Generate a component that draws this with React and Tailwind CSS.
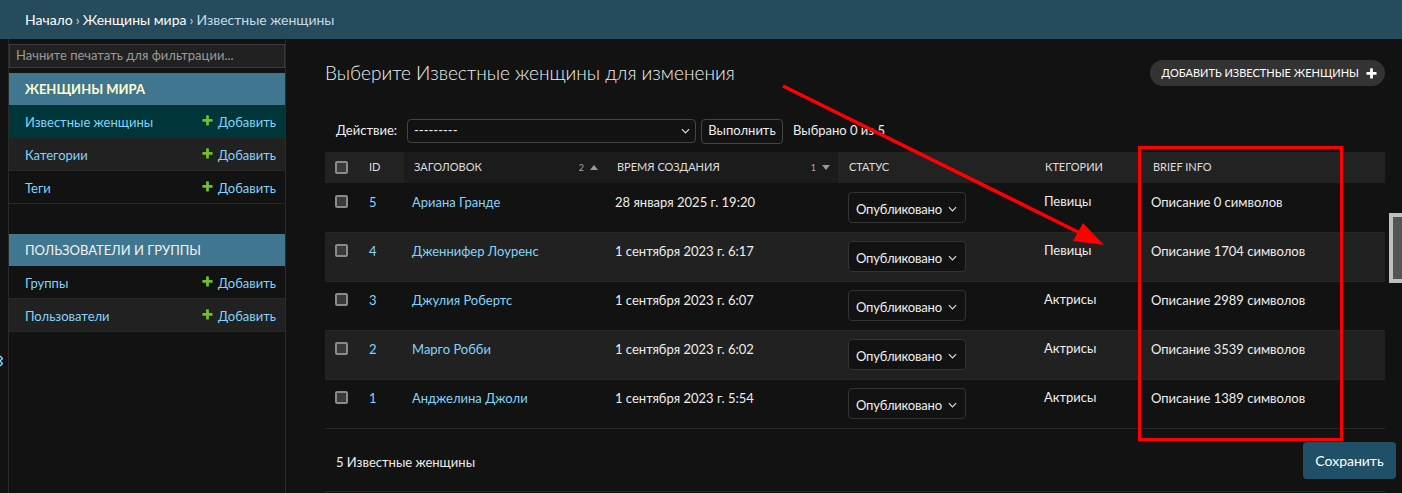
import { useState } from 'react'

const rows = [
  { id: 5, title: 'Ариана Гранде', date: '28 января 2025 г. 19:20', cat: 'Певицы', info: 'Описание 0 символов' },
  { id: 4, title: 'Дженнифер Лоуренс', date: '1 сентября 2023 г. 6:17', cat: 'Певицы', info: 'Описание 1704 символов' },
  { id: 3, title: 'Джулия Робертс', date: '1 сентября 2023 г. 6:07', cat: 'Актрисы', info: 'Описание 2989 символов' },
  { id: 2, title: 'Марго Робби', date: '1 сентября 2023 г. 6:02', cat: 'Актрисы', info: 'Описание 3539 символов' },
  { id: 1, title: 'Анджелина Джоли', date: '1 сентября 2023 г. 5:54', cat: 'Актрисы', info: 'Описание 1389 символов' },
]

const PLUS =
  'M1600 796v192q0 40-28 68t-68 28h-416v416q0 40-28 68t-68 28h-192q-40 0-68-28t-28-68v-416h-416q-40 0-68-28t-28-68v-192q0-40 28-68t68-28h416v-416q0-40 28-68t68-28h192q40 0 68 28t28 68v416h416q40 0 68 28t28 68z'

function PlusIcon({ className, fill }) {
  return (
    <svg viewBox="0 0 1792 1792" className={className}>
      <path d={PLUS} fill={fill} />
    </svg>
  )
}

function Chevron() {
  return (
    <svg viewBox="0 0 10 6" className="w-[9px] h-[6px] shrink-0">
      <polyline points="1,1 5,5 9,1" fill="none" stroke="#ddd" strokeWidth="1.3" />
    </svg>
  )
}

function Checkbox() {
  return <span className="block w-[13px] h-[13px] rounded-[2px] border-2 border-[#8a8a8a] bg-[#3a3a3a]" />
}

function SortMark({ n, up }) {
  return (
    <span className="flex items-center gap-[6px] text-[9px] text-[#aaa]">
      {n}
      <svg viewBox="0 0 8 5" className="w-[8px] h-[5px]">
        <polygon points={up ? '0,5 4,0 8,5' : '0,0 8,0 4,5'} fill="#999" />
      </svg>
    </span>
  )
}

function SideRow({ label, alt, current }) {
  const bg = current ? 'bg-[#00363a]' : alt ? 'bg-[#212121]' : 'bg-[#121212]'
  return (
    <div className={`${bg} h-[33px] border-b border-[#272727] flex items-center justify-between pl-[16px] pr-[9px] pt-[3px] text-[13px]`}>
      <span className="text-[#81d4fa]">{label}</span>
      <span className="flex items-center gap-[4px] text-[#81d4fa]">
        <PlusIcon className="w-[13px] h-[13px] -mt-[4px]" fill="#70bf2b" />
        Добавить
      </span>
    </div>
  )
}

export default function App() {
  const [status] = useState('Опубликовано')

  return (
    <div className="relative w-[1402px] h-[493px] overflow-hidden bg-[#121212] text-[#eee] font-['Lato','Liberation_Sans',sans-serif]">
      {/* breadcrumbs */}
      <div className="h-[39px] bg-[#264b5d] flex items-center pl-[25px] text-[14px] text-[#c4dce8]">
        <span className="text-white">Начало</span>
        <span className="mx-[3px]">›</span>
        <span className="text-white">Женщины мира</span>
        <span className="mx-[3px]">›</span>
        <span>Известные женщины</span>
      </div>

      <div className="flex h-[454px]">
        {/* sidebar toggle */}
        <div className="w-[9px] border-r border-[#2a2a2a] pt-[316px]">
          <svg viewBox="0 0 3 12" className="w-[3px] h-[12px]">
            <polyline points="0,1 2.5,3.5 0,6" fill="none" stroke="#81d4fa" strokeWidth="1.4" />
            <polyline points="0,6 2.5,8.5 0,11" fill="none" stroke="#81d4fa" strokeWidth="1.4" />
          </svg>
        </div>

        {/* sidebar */}
        <div className="w-[277px] border-r border-[#2a2a2a] flex flex-col">
          <div className="mt-[5px] h-[24px] border border-[#3a3a3a] bg-[#212121] flex items-center px-[6px] text-[13px] text-[#9a9a9a]">
            Начните печатать для фильтрации...
          </div>
          <div className="mt-[5px] h-[32px] bg-[#417690] flex items-center pl-[16px] pt-[2px] text-[13px] font-bold text-[#ffc]">
            ЖЕНЩИНЫ МИРА
          </div>
          <SideRow label="Известные женщины" current />
          <SideRow label="Категории" alt />
          <SideRow label="Теги" />
          <div className="h-[30px]" />
          <div className="h-[32px] bg-[#417690] flex items-center pl-[16px] pt-[2px] text-[13px] text-[#f2f2f2]">
            ПОЛЬЗОВАТЕЛИ И ГРУППЫ
          </div>
          <SideRow label="Группы" />
          <SideRow label="Пользователи" alt />
        </div>

        {/* main */}
        <div className="flex-1 pl-[39px] pr-[6px]">
          <div className="mr-[11px] mt-[21px] h-[26px] flex items-center justify-between">
            <h1 className="text-[19px] font-light text-[#eee]">Выберите Известные женщины для изменения</h1>
            <div className="h-[26px] rounded-[15px] bg-[#333] flex items-center pl-[12px] pr-[7px] gap-[6px] text-[11px] text-white">
              ДОБАВИТЬ ИЗВЕСТНЫЕ ЖЕНЩИНЫ
              <PlusIcon className="w-[13px] h-[13px]" fill="#fff" />
            </div>
          </div>

          {/* actions */}
          <div className="mr-[11px] mt-[32px] h-[26px] flex items-center pl-[11px] text-[13px]">
            <span className="w-[71px]">Действие:</span>
            <div className="w-[289px] h-[24px] border border-[#444] rounded-[4px] flex items-center justify-between pl-[6px] pr-[5px]">
              <span>---------</span>
              <Chevron />
            </div>
            <div className="ml-[5px] w-[82px] h-[25px] border border-[#444] rounded-[4px] flex items-center justify-center">Выполнить</div>
            <span className="ml-[10px]">Выбрано 0 из 5</span>
          </div>

          {/* table */}
          <div className="mr-[11px] mt-[8px]">
            <div className="grid grid-cols-[35px_44px_203px_231px_197px_108px_1fr] h-[32px] text-[11px] text-[#ddd] border-b border-[#121212]">
              <div className="bg-[#222] flex items-center pl-[10px]"><Checkbox /></div>
              <div className="bg-[#222] flex items-center pl-[9px]">ID</div>
              <div className="bg-[#1b1b1b] flex items-center justify-between pl-[10px] pr-[9px]">
                ЗАГОЛОВОК <SortMark n="2" up />
              </div>
              <div className="bg-[#1b1b1b] flex items-center justify-between pl-[10px] pr-[8px]">
                ВРЕМЯ СОЗДАНИЯ <SortMark n="1" />
              </div>
              <div className="bg-[#222] flex items-center pl-[11px]">СТАТУС</div>
              <div className="bg-[#222] flex items-center pl-[10px]">КТЕГОРИИ</div>
              <div className="bg-[#222] flex items-center pl-[10px]">BRIEF INFO</div>
            </div>
            {rows.map((r, i) => (
              <div
                key={r.id}
                className={`grid grid-cols-[35px_44px_203px_231px_197px_108px_1fr] h-[49px] border-b border-[#272727] text-[13px] leading-[16px] ${i % 2 ? 'bg-[#212121]' : 'bg-[#121212]'}`}
              >
                <div className="pl-[10px] pt-[11px]"><Checkbox /></div>
                <div className="pl-[9px] pt-[10px] text-[#81d4fa]">{r.id}</div>
                <div className="pl-[8px] pt-[10px] text-[#81d4fa]">{r.title}</div>
                <div className="pl-[8px] pt-[10px]">{r.date}</div>
                <div className="pl-[10px] pt-[8px]">
                  <div className="w-[118px] h-[31px] border border-[#333] rounded-[4px] bg-[#121212] flex items-center justify-between pl-[7px] pr-[8px] text-[13px] tracking-[-0.2px] pt-[3px]">
                    {status}
                    <Chevron />
                  </div>
                </div>
                <div className="pl-[9px] pt-[9px]">{r.cat}</div>
                <div className="pl-[8px] pt-[10px]">{r.info}</div>
              </div>
            ))}
          </div>

          {/* footer */}
          <div className="mr-[11px] h-[63px] border-b border-[#272727] flex items-center justify-between pl-[11px] text-[13px]">
            <span className="mt-[5px]">5 Известные женщины</span>
            <div className="-mr-[11px] h-[37px] w-[93px] rounded-[4px] bg-[#205067] flex items-center justify-center text-[14px] text-white">
              Сохранить
            </div>
          </div>
        </div>
      </div>

      {/* grey box at the right edge */}
      <div className="absolute left-[1389px] top-[213px] w-[20px] h-[70px] border-[4px] border-[#c0c0c0] bg-[#555]" />

      {/* red annotation */}
      <svg className="absolute inset-0 pointer-events-none" width="1402" height="493">
        <line x1="783" y1="86" x2="1080" y2="233" stroke="#ff0000" strokeWidth="3.5" />
        <polygon points="1104,245 1073,241 1083,223" fill="#ff0000" />
        <rect x="1139.5" y="147.5" width="202" height="292" fill="none" stroke="#ff0000" strokeWidth="3" />
      </svg>
    </div>
  )
}
